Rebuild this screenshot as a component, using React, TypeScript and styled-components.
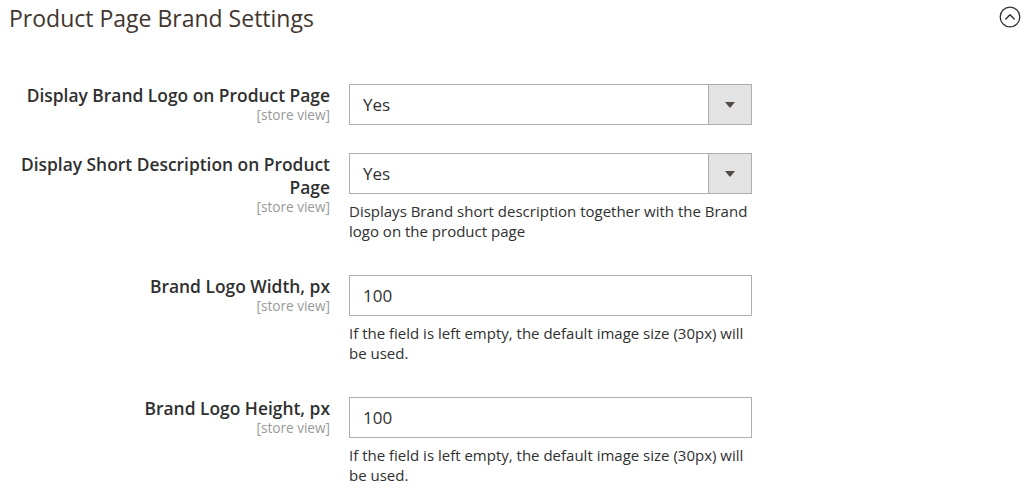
import styled, { createGlobalStyle } from "styled-components";

const GlobalStyle = createGlobalStyle`
    html, body {
        margin: 0;
        padding: 0;
        background: #ffffff;
    }
    body {
        font-family: "Open Sans", "Liberation Sans", sans-serif;
        color: #303030;
    }
`

interface SettingRow {
    label: string;
    scope: string;
    kind: 'select' | 'text';
    value: string;
    note?: string;
}

const rows: SettingRow[] = [
    { label: 'Display Brand Logo on Product Page', scope: '[store view]', kind: 'select', value: 'Yes' },
    {
        label: 'Display Short Description on Product Page',
        scope: '[store view]',
        kind: 'select',
        value: 'Yes',
        note: 'Displays Brand short description together with the Brand logo on the product page',
    },
    {
        label: 'Brand Logo Width, px',
        scope: '[store view]',
        kind: 'text',
        value: '100',
        note: 'If the field is left empty, the default image size (30px) will be used.',
    },
    {
        label: 'Brand Logo Height, px',
        scope: '[store view]',
        kind: 'text',
        value: '100',
        note: 'If the field is left empty, the default image size (30px) will be used.',
    },
];

const CollapseIcon = () => (
    <svg width="22" height="22" viewBox="0 0 22 22" fill="none">
        <circle cx="11" cy="11" r="9.8" stroke="#333" strokeWidth="1.3" />
        <polyline points="6.8,13 11,8.8 15.2,13" stroke="#333" strokeWidth="1.5" strokeLinecap="round" strokeLinejoin="round" />
    </svg>
)

const App = () => {
    return (
    <>
        <GlobalStyle />
        <Section>
            <SectionHeader>
                <SectionTitle>Product Page Brand Settings</SectionTitle>
                <CollapseButton><CollapseIcon /></CollapseButton>
            </SectionHeader>

            <Fieldset>
                {rows.map((row) => (
                    <FieldRow key={row.label} hasNote={!!row.note}>
                        <LabelCell>
                            <FieldLabel>{row.label}</FieldLabel>
                            <ScopeLabel>{row.scope}</ScopeLabel>
                        </LabelCell>
                        <ControlCell>
                            {row.kind === 'select' ? (
                                <SelectBox>
                                    <SelectValue>{row.value}</SelectValue>
                                    <SelectArrow><ArrowTriangle /></SelectArrow>
                                </SelectBox>
                            ) : (
                                <TextInput>{row.value}</TextInput>
                            )}
                            {row.note && <FieldNote>{row.note}</FieldNote>}
                        </ControlCell>
                    </FieldRow>
                ))}
            </Fieldset>
        </Section>
    </>
    )
}

export default App;

const Section = styled.div`
    width: 1031px;
    padding: 0 10px 0 9px;
    box-sizing: border-box;
`

const SectionHeader = styled.div`
    display: flex;
    justify-content: space-between;
    align-items: center;
    height: 36px;
`

const SectionTitle = styled.h2`
    margin: 0;
    font-size: 23px;
    font-weight: 400;
    color: #41362f;
    line-height: 36px;
`

const CollapseButton = styled.span`
    display: flex;
    width: 22px;
    height: 22px;
    margin-top: -2px;
`

const Fieldset = styled.div`
    display: flex;
    flex-direction: column;
    padding-top: 48px;
`

interface FieldRowProps {
    hasNote?: boolean
}

const FieldRow = styled.div<FieldRowProps>`
    display: grid;
    grid-template-columns: 321px 403px;
    column-gap: 19px;
    margin-bottom: ${(props) => props.hasNote ? "34px" : "28px"};
`

const LabelCell = styled.div`
    display: flex;
    flex-direction: column;
    align-items: flex-end;
    text-align: right;
`

const FieldLabel = styled.span`
    font-size: 17.4px;
    font-weight: 600;
    line-height: 23px;
    color: #303030;
`

const ScopeLabel = styled.span`
    font-size: 13.6px;
    line-height: 13px;
    margin-top: 1px;
    color: #999999;
`

const ControlCell = styled.div`
    display: flex;
    flex-direction: column;
`

const SelectBox = styled.div`
    display: flex;
    height: 41px;
    box-sizing: border-box;
    border: 1px solid #adadad;
    background: #ffffff;
`

const SelectValue = styled.span`
    flex: 1;
    display: flex;
    align-items: center;
    padding-left: 13px;
    font-size: 17px;
    color: #303030;
`

const SelectArrow = styled.span`
    width: 42px;
    display: flex;
    align-items: center;
    justify-content: center;
    background: #e3e3e3;
    border-left: 1px solid #adadad;
`

const ArrowTriangle = styled.span`
    width: 0;
    height: 0;
    border-left: 5px solid transparent;
    border-right: 5px solid transparent;
    border-top: 6px solid #514943;
`

const TextInput = styled.div`
    display: flex;
    align-items: center;
    height: 41px;
    box-sizing: border-box;
    border: 1px solid #adadad;
    padding-left: 13px;
    font-size: 17px;
    color: #303030;
`

const FieldNote = styled.div`
    margin-top: 7px;
    font-size: 15px;
    line-height: 20px;
    color: #303030;
`
